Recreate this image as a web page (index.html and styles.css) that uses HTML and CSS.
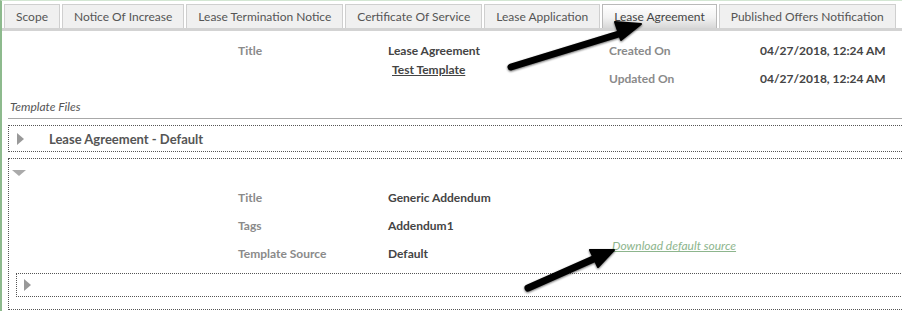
FILE: index.html
```html
<!DOCTYPE html>
<html>
<head>
<meta charset="utf-8">
<link rel="stylesheet" href="styles.css">
</head>
<body>
<div class="page">
  <div class="tabs">
    <div class="tab">Scope</div>
    <div class="tab">Notice Of Increase</div>
    <div class="tab">Lease Termination Notice</div>
    <div class="tab">Certificate Of Service</div>
    <div class="tab">Lease Application</div>
    <div class="tab active">Lease Agreement</div>
    <div class="tab">Published Offers Notification</div>
  </div>
  <div class="tabbar"></div>

  <div class="info">
    <div class="col c1"><div class="label">Title</div></div>
    <div class="col c2">
      <div class="value">Lease Agreement</div>
      <div class="value sub"><a class="plain-link">Test Template</a></div>
    </div>
    <div class="col c3 spaced">
      <div class="label">Created On</div>
      <div class="label">Updated On</div>
    </div>
    <div class="col c4 spaced">
      <div class="value">04/27/2018, 12:24 AM</div>
      <div class="value">04/27/2018, 12:24 AM</div>
    </div>
  </div>

  <div class="files">
    <div class="files-title">Template Files</div>
    <div class="box closed">
      <span class="tri-right"></span>
      <span class="box-title">Lease Agreement - Default</span>
    </div>
    <div class="box open">
      <span class="tri-down"></span>
      <div class="fields">
        <div class="label">Title</div><div class="value">Generic Addendum</div><div></div>
        <div class="label">Tags</div><div class="value">Addendum1</div><div></div>
        <div class="label">Template Source</div><div class="value">Default</div><div class="dl"><a class="dl-link">Download default source</a></div>
      </div>
      <div class="box inner">
        <span class="tri-right"></span>
      </div>
    </div>
  </div>

  <svg class="arrows" width="902" height="311" viewBox="0 0 902 311">
    <defs>
      <filter id="sh" x="-20%" y="-50%" width="140%" height="200%">
        <feGaussianBlur in="SourceAlpha" stdDeviation="1.2"/>
        <feOffset dx="0" dy="1"/>
        <feComponentTransfer><feFuncA type="linear" slope="0.6"/></feComponentTransfer>
        <feMerge><feMergeNode/><feMergeNode in="SourceGraphic"/></feMerge>
      </filter>
    </defs>
    <g filter="url(#sh)" fill="#000" stroke="#000">
      <line x1="511" y1="67" x2="622" y2="33" stroke-width="7" stroke-linecap="round"/>
      <polygon points="641,24 621,40 615,22" stroke-width="2" stroke-linejoin="round"/>
      <line x1="528" y1="288" x2="598" y2="257" stroke-width="7" stroke-linecap="round"/>
      <polygon points="614,250 598,267 590,250" stroke-width="2" stroke-linejoin="round"/>
    </g>
  </svg>
</div>
</body>
</html>
```

FILE: styles.css
```css
html, body {
  margin: 0;
  padding: 0;
  background: #fff;
  overflow: hidden;
}
body {
  font-family: Lato, "Open Sans", "Liberation Sans", sans-serif;
  font-size: 12px;
  color: #555;
}
.page {
  position: relative;
  width: 902px;
  height: 311px;
  box-sizing: border-box;
  border-left: 2px solid #8dba8d;
  border-top: 1px solid #d3e6d3;
  overflow: hidden;
}
.tabs {
  display: flex;
  gap: 2px;
  padding: 3px 0 0 2px;
}
.tab {
  height: 23px;
  line-height: 23px;
  padding: 0 11px;
  border: 1px solid #cfcfcf;
  border-bottom: none;
  background: #f0f0f0;
  color: #555;
  white-space: nowrap;
}
.tab.active {
  background: linear-gradient(#ffffff, #f2f2f2 55%, #d8d8d8);
  border-color: #b9b9b9;
  color: #444;
}
.tabbar {
  height: 3px;
  background: #d3d3d3;
}
.info {
  display: flex;
  padding: 11px 0 0 236px;
  height: 56px;
}
.col {
  display: flex;
  flex-direction: column;
}
.c1 { width: 150px; }
.c2 { width: 221px; }
.c3 { width: 151px; }
.spaced { gap: 10px; }
.label {
  color: #8a8a8a;
  font-weight: 700;
  line-height: 18px;
}
.value {
  color: #444;
  font-weight: 700;
  line-height: 18px;
}
.value.sub {
  padding-left: 4px;
  line-height: 19px;
}
.plain-link {
  color: #444;
  text-decoration: underline;
}
.files {
  padding-left: 6px;
  margin-right: -20px;
}
.files-title {
  font-style: italic;
  color: #555;
  line-height: 18px;
  padding-left: 2px;
  border-bottom: 1px solid #a8a8a8;
  padding-bottom: 2px;
}
.box {
  border: 1px dotted #555;
  box-sizing: border-box;
}
.box.closed {
  margin-top: 6px;
  height: 27px;
  display: flex;
  align-items: center;
  padding-left: 8px;
}
.box-title {
  font-size: 13px;
  color: #555;
  font-weight: 700;
  margin-left: 25px;
}
.tri-right {
  width: 0;
  height: 0;
  border-top: 6.5px solid transparent;
  border-bottom: 6.5px solid transparent;
  border-left: 7px solid #999;
}
.tri-down {
  display: block;
  width: 0;
  height: 0;
  margin: 11px 0 0 3px;
  border-left: 7px solid transparent;
  border-right: 7px solid transparent;
  border-top: 6px solid #aaa;
}
.box.open {
  margin-top: 6px;
  padding-bottom: 12px;
}
.fields {
  display: grid;
  grid-template-columns: 150px 224px auto;
  grid-auto-rows: 28px;
  align-items: center;
  padding: 8px 0 0 229px;
}
.dl {
  align-self: start;
  line-height: 18px;
  margin-top: -3px;
}
.dl-link {
  font-style: italic;
  color: #8db58d;
  text-decoration: underline;
}
.box.inner {
  margin: 5px 0 0 7px;
  height: 24px;
  display: flex;
  align-items: center;
  padding-left: 7px;
}
.arrows {
  position: absolute;
  left: -2px;
  top: -1px;
  pointer-events: none;
}
```
